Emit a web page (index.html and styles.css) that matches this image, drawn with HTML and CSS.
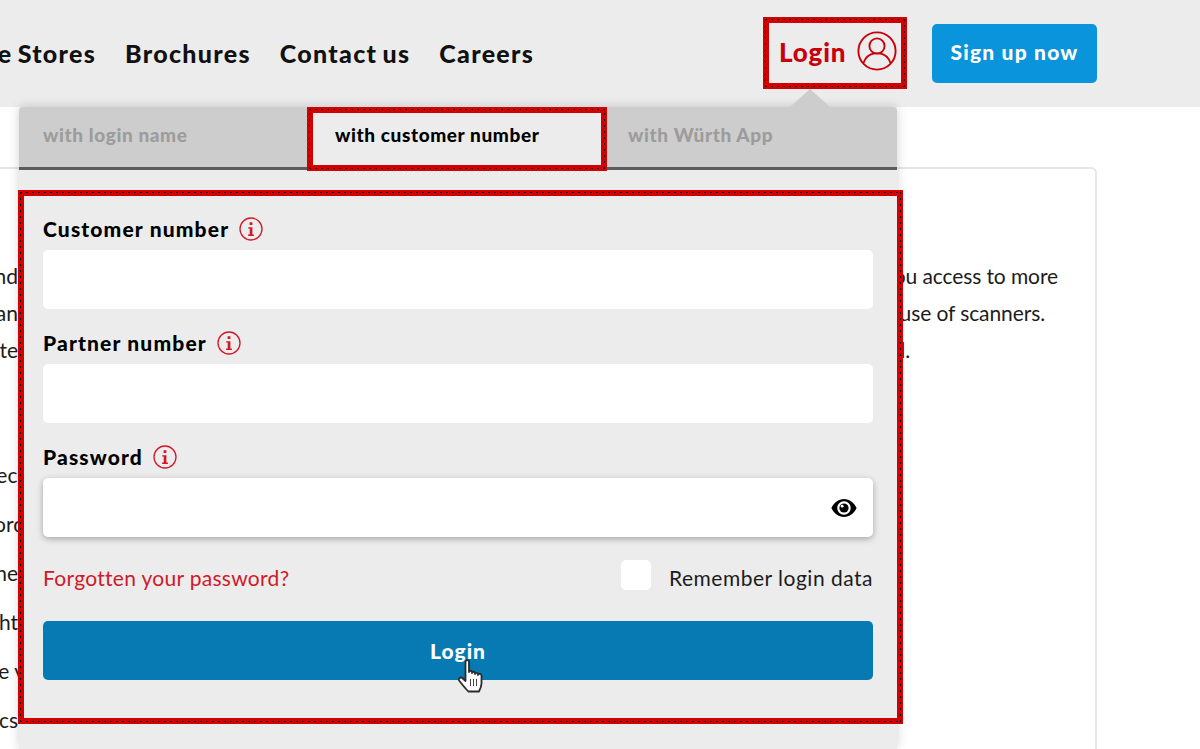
FILE: index.html
```html
<!DOCTYPE html>
<html lang="en">
<head>
<meta charset="utf-8">
<title>Login</title>
<link rel="stylesheet" href="styles.css">
</head>
<body>
<header class="topbar">
  <nav class="nav">
    <a class="nav-link">Online Stores</a>
    <a class="nav-link">Brochures</a>
    <a class="nav-link">Contact us</a>
    <a class="nav-link">Careers</a>
  </nav>
  <div class="actions">
    <a class="login-link hl"><span>Login</span>
      <svg class="user-icon" viewBox="0 0 40 40" fill="none" stroke="currentColor" stroke-width="1.9">
        <circle cx="20" cy="20" r="18.6"/>
        <circle cx="20" cy="15" r="7.6"/>
        <path d="M6.5 32c2-5.500 6-9 11-9.600h5c5 .6 9 4.100 11 9.600"/>
      </svg>
    </a>
    <a class="signup">Sign up now</a>
  </div>
</header>

<main class="content">
  <section class="card">
    <div class="line"><span class="left">registered users and</span><span class="right">gives you access to more</span></div>
    <div class="line"><span class="left">orders in the shop an</span><span class="right right-b">the use of scanners.</span></div>
    <div class="line"><span class="left">your data is kept up to date</span><span class="right right-c">and d.</span></div>
    <div class="line line-d"><span class="left left-over">Order direct</span></div>
    <div class="line line-e"><span class="left left-over">Check your previous record</span></div>
    <div class="line line-e"><span class="left">Track the</span></div>
    <div class="line line-e"><span class="left">Get the right</span></div>
    <div class="line line-e"><span class="left left-over">Save v</span></div>
    <div class="line line-e"><span class="left">Analytics</span></div>
  </section>
</main>

<div class="dropdown">
  <div class="arrow"></div>
  <div class="tabs">
    <div class="tab">with login name</div>
    <div class="tab tab-active hl">with customer number</div>
    <div class="tab tab-last">with Würth App</div>
  </div>
  <form class="form hl">
    <div class="field">
      <div class="label">Customer number <svg class="info" viewBox="0 0 24 24"><circle cx="12" cy="12" r="11" fill="none" stroke="currentColor" stroke-width="1.300"/><path d="M10.600 5.300h2.800v2.800h-2.800zM9.200 10.200h4.200v7.300h1.500v1.400H9.100v-1.400h1.600v-5.900H9.200z" fill="currentColor"/></svg></div>
      <div class="input"></div>
    </div>
    <div class="field">
      <div class="label">Partner number <svg class="info" viewBox="0 0 24 24"><circle cx="12" cy="12" r="11" fill="none" stroke="currentColor" stroke-width="1.300"/><path d="M10.600 5.300h2.800v2.800h-2.800zM9.200 10.200h4.200v7.300h1.500v1.400H9.100v-1.400h1.600v-5.900H9.200z" fill="currentColor"/></svg></div>
      <div class="input"></div>
    </div>
    <div class="field">
      <div class="label">Password <svg class="info" viewBox="0 0 24 24"><circle cx="12" cy="12" r="11" fill="none" stroke="currentColor" stroke-width="1.300"/><path d="M10.600 5.300h2.800v2.800h-2.800zM9.200 10.200h4.200v7.300h1.500v1.400H9.100v-1.400h1.600v-5.900H9.200z" fill="currentColor"/></svg></div>
      <div class="input input-focus">
        <svg class="eye" viewBox="0 0 26 18"><path fill-rule="evenodd" d="M13 0C7.500 0 3 3.600.4 9 3 14.400 7.500 18 13 18s10-3.600 12.600-9C23 3.600 18.500 0 13 0zm0 2.300c-3.700 0-6.700 3-6.700 6.700s3 6.700 6.700 6.700 6.700-3 6.700-6.700-3-6.700-6.700-6.700z" fill="#000"/><circle cx="13" cy="9" r="4.600" fill="#000"/><circle cx="11.200" cy="7.200" r="1.400" fill="#fff"/></svg>
      </div>
    </div>
    <div class="options">
      <a class="forgot">Forgotten your password?</a>
      <label class="remember"><span class="checkbox"></span><span class="remember-text">Remember login data</span></label>
    </div>
    <button class="submit" type="button">Login</button>
  </form>
  <svg class="cursor" viewBox="0 0 25 34">
    <path d="M7.500 2.700C7.500.7 11 .7 11 2.700V13c0-1.700 3-1.700 3 0v1c0-1.700 3-1.700 3 0v1c0-1.600 3-1.600 3 0v1c.2-1.500 3.500-1.500 3.500.5v8c0 3-1 5-2.500 8H10.500C8 30.500 5 26.500 1.300 21.800c-1.500-2 1-4.300 3-2.800l3.200 3z" fill="#fff" stroke="#2b2b2b" stroke-width="1.800" stroke-linejoin="round"/>
    <path d="M12.500 20v7M15.500 20v7M18.500 20v7" stroke="#444" stroke-width="1"/>
  </svg>
</div>
</body>
</html>
```

FILE: styles.css
```css
* { box-sizing: border-box; }
html, body { margin: 0; padding: 0; height: 749px; overflow: hidden; background: #fff; }
body { font-family: "Lato", "Liberation Sans", sans-serif; color: #1c1c1c; position: relative; }

.topbar { height: 107px; background: #ececec; display: flex; align-items: center; justify-content: space-between; padding-right: 103px; }
.nav { display: flex; gap: 29px; margin-left: -70px; margin-top: -1px; }
.nav-link { font-size: 25px; font-weight: 900; color: #111; letter-spacing: 1.3px; word-spacing: -2px; white-space: nowrap; }
.actions { display: flex; align-items: center; gap: 25px; margin-top: -1px; }

.hl { position: relative; border: 6px solid #d20000; }
.hl::after { content: ""; position: absolute; inset: -4px; pointer-events: none;
  background:
    repeating-linear-gradient(90deg, #000 0 2px, transparent 2px 6px) top left / 100% 1px no-repeat,
    repeating-linear-gradient(90deg, #000 0 2px, transparent 2px 6px) bottom left / 100% 1px no-repeat,
    repeating-linear-gradient(0deg, #000 0 2px, transparent 2px 6px) top left / 1px 100% no-repeat,
    repeating-linear-gradient(0deg, #000 0 2px, transparent 2px 6px) top right / 1px 100% no-repeat; }

.login-link { width: 144px; height: 72px; display: flex; align-items: center; padding: 0 0 3px 10px; gap: 11px; color: #c8000b; font-size: 26px; font-weight: 900; letter-spacing: .8px; }
.user-icon { width: 40px; height: 40px; margin-top: -2px; flex: none; }
.signup { width: 165px; height: 59px; padding-bottom: 3px; border-radius: 5px; background: #0a94dc; color: #fff; font-size: 21px; font-weight: 900; letter-spacing: 1.2px; display: flex; align-items: center; justify-content: center; }

.content { margin-top: 60px; margin-right: 103px; }
.card { height: 582px; border: 2px solid #e6e6e6; border-left: 0; border-bottom: 0; border-radius: 0 6px 0 0; padding-top: 88px; }
.line { display: flex; justify-content: space-between; font-size: 21px; line-height: 37px; height: 37px; white-space: nowrap; }
.line-third { margin-top: 1px; }
.left { width: 18px; display: flex; justify-content: flex-end; }
.left-over { width: 25px; }
.right { padding-right: 37px; letter-spacing: -.1px; }
.right-b { padding-right: 50px; }
.right-c { padding-right: 185px; }
.line-d { margin-top: 88px; }
.line-e { margin-top: 12px; }

.dropdown { position: absolute; left: 19px; top: 107px; width: 878px; height: 642px; background: #ececec; box-shadow: 0 0 10px rgba(0,0,0,.18); }
.arrow { position: absolute; right: 67px; top: -18px; width: 0; height: 0; border-left: 20px solid transparent; border-right: 20px solid transparent; border-bottom: 18px solid #cdcdcd; }
.tabs { display: grid; grid-template-columns: 288px 300px 290px; height: 63px; background: #cdcdcd; border-bottom: 3px solid #5c5c5c; border-radius: 4px 4px 0 0; }
.tab { font-size: 19px; font-weight: 900; color: #9c9c9c; letter-spacing: .6px; display: flex; align-items: center; padding: 0 0 7px 24px; white-space: nowrap; }
.tab-active { background: #ececec; color: #000; margin-bottom: -3px; height: 64px; padding: 0 0 9px 22px; }
.tab-last { padding-left: 21px; }

.form { position: absolute; left: -1px; top: 83px; width: 885px; height: 534px; padding: 16px 24px 0 19px; display: flex; flex-direction: column; }
.field { height: 114px; }
.label { font-size: 21px; font-weight: 900; color: #000; height: 38px; padding-bottom: 5px; display: flex; align-items: center; gap: 10px; letter-spacing: 1.15px; }
.info { width: 24px; height: 24px; color: #cf1a2a; flex: none; }
.input { width: 830px; height: 59px; background: #fff; border-radius: 5px; }
.input-focus { position: relative; display: flex; align-items: center; justify-content: flex-end; padding-right: 16px; box-shadow: 0 2px 6px rgba(0,0,0,.3); }
.eye { width: 26px; height: 18px; }
.options { width: 830px; display: flex; align-items: center; justify-content: space-between; height: 30px; margin-top: 6px; }
.forgot { color: #cf1a2a; font-size: 21px; letter-spacing: .3px; padding-top: 5px; }
.remember { display: flex; align-items: center; gap: 18px; font-size: 21px; color: #1c1c1c; letter-spacing: .5px; }
.remember-text { padding-top: 5px; }
.checkbox { width: 30px; height: 30px; background: #fff; border-radius: 5px; }
.submit { width: 830px; height: 59px; margin-top: 31px; border: 0; border-radius: 5px; background: #077ab4; color: #fff; font-family: inherit; font-size: 21px; font-weight: 900; letter-spacing: 1px; padding: 0; }
.cursor { position: absolute; left: 439px; top: 552px; width: 25px; height: 34px; }
```
